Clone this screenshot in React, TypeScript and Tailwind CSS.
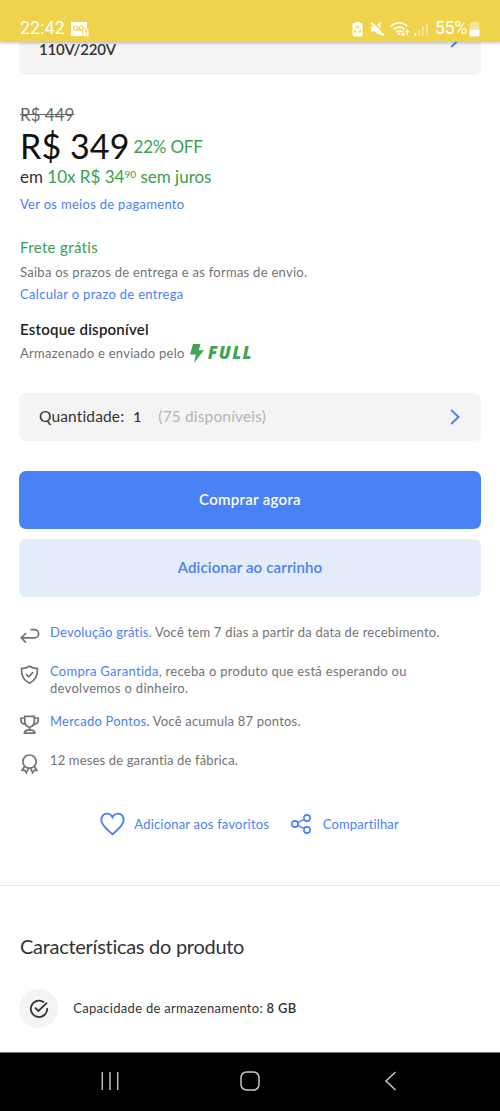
import React from "react";

const StatusBar = () => {
  return (
    <header className="relative z-10 flex h-[42px] shrink-0 items-end justify-between bg-[#efd34c] pb-[4px] pl-5 pr-[20px] font-['Roboto',sans-serif] text-[18px] leading-[20px] text-white shadow-[0_1px_3px_rgba(0,0,0,0.25)]">
      <div className="flex items-center gap-[5px]">
        <span>22:42</span>
        <svg width="20" height="16" viewBox="0 0 20 16" fill="none" className="mt-[1px]">
          <path d="M1 1h16v7h1v7H1z" fill="#fff" />
          <circle cx="5.700" cy="7" r="2" stroke="#efd34c" strokeWidth="1.200" />
          <circle cx="11.300" cy="7" r="2" stroke="#efd34c" strokeWidth="1.200" />
          <path d="M5.700 9h5.600" stroke="#efd34c" strokeWidth="1.200" />
          <rect x="12.600" y="7.600" width="6.400" height="7.800" rx="1" fill="#fff" stroke="#efd34c" strokeWidth="0.800" />
          <path d="M15 10l1.200-.6v4.200" stroke="#efd34c" strokeWidth="1.100" />
        </svg>
      </div>
      <div className="flex items-center">
        <svg width="11" height="16" viewBox="0 0 11 16" fill="none" className="mr-[7px] mt-[1px]">
          <path d="M3 1h5v1.500H3z" fill="#fff" />
          <rect x="0.500" y="2" width="10" height="13.500" rx="1.600" fill="#fff" />
          <path d="M3.800 7.400l1.700-2.400 1.700 2.400M8 8.600l.7 2.300H6.200M3 8.600l-.7 2.300h2.400" stroke="#efd34c" strokeWidth="1.100" />
        </svg>
        <svg width="15" height="16" viewBox="0 0 15 16" fill="none" className="mr-[5px] mt-[1px]">
          <path d="M1 5.500h3.500L10.500 1v13.500L4.500 10.500H1z" fill="#fff" />
          <path d="M3 .8l11.500 11.700" stroke="#efd34c" strokeWidth="1.600" />
          <path d="M1.200 1.600l12.500 12.800" stroke="#fff" strokeWidth="1.900" />
        </svg>
        <svg width="20" height="16" viewBox="0 0 20 16" fill="none" className="mr-[4px] mt-[1px]">
          <path d="M1 5.400c4.600-4.600 11.600-4.600 16.200 0M3.700 8.400c3-3 7.800-3 10.800 0" stroke="#fff" strokeWidth="1.700" />
          <path d="M6.300 11.200c1.600-1.500 4-1.500 5.200-.4" stroke="#fff" strokeWidth="1.600" />
          <circle cx="9" cy="12.800" r="1.300" fill="#fff" />
          <path d="M13 9.500v5M11.300 12.800l1.700 1.900 1.700-1.900M17.300 14.500V9.300M15.600 11l1.700-1.900L19 11" stroke="#fff" strokeWidth="1.200" />
        </svg>
        <svg width="14" height="16" viewBox="0 0 14 16" fill="#fff" className="mr-[7px] mt-[1px]">
          <rect x="0.500" y="12" width="1.600" height="3" />
          <rect x="4.200" y="9" width="1.600" height="6" opacity="0.450" />
          <rect x="8" y="5.500" width="1.600" height="9.500" opacity="0.450" />
          <rect x="12" y="2" width="1.600" height="13" opacity="0.450" />
        </svg>
        <span className="mr-[2px] tracking-[-0.400px]">55%</span>
        <svg width="11" height="16" viewBox="0 0 11 16" className="mt-[1px]">
          <path d="M3 1h5v1h1.500q1 0 1 1v5.500H.5V3q0-1 1-1H3z" fill="#fff" opacity="0.450" />
          <path d="M.5 8.500h10V14q0 1.500-1.500 1.500H2Q.5 15.500.5 14z" fill="#fff" />
        </svg>
      </div>
    </header>
  );
};

const Chevron = () => {
  return (
    <svg width="10" height="16" viewBox="0 0 10 16" fill="none" stroke="#4882f4" strokeWidth="1.900">
      <path d="M1.200 1l7.300 7-7.300 7" />
    </svg>
  );
};

const iconProps = {
  width: 20,
  height: 20,
  viewBox: "0 0 20 20",
  fill: "none",
  stroke: "#737373",
  strokeWidth: 1.7,
};

const Benefits = () => {
  return (
    <ul className="mt-[27px] flex flex-col gap-4 pl-[0.700px] text-[13px] leading-[17px] text-[#737373]">
      <li className="flex min-h-[23px] gap-[10px]">
        <svg {...iconProps} className="mt-[2px] shrink-0">
          <path d="M10.500 3.600h4a4.100 4.100 0 0 1 0 8.200H1.200M6 7L1.200 11.800 6 16.600" />
        </svg>
        <p className="tracking-[0.210px]">
          <span className="text-[#4882f4]">Devolução grátis.</span> Você tem 7 dias a partir da data de recebimento.
        </p>
      </li>
      <li className="flex min-h-[23px] gap-[10px]">
        <svg {...iconProps} className="mt-[2px] shrink-0">
          <path d="M9.500 1.200C7.200 2.900 4.700 3.500 1.500 3.600c-.3 7.200 1.500 11.700 8 14.600 6.500-2.900 8.300-7.400 8-14.600-3.200-.1-5.700-.7-8-2.400z" />
          <path d="M6 9.200l2.600 2.600 4.600-4.600" />
        </svg>
        <p className="tracking-[0.290px]">
          <span className="text-[#4882f4]">Compra Garantida</span>, receba o produto que está esperando ou
          <br />
          devolvemos o dinheiro.
        </p>
      </li>
      <li className="flex min-h-[23px] gap-[10px]">
        <svg {...iconProps} className="mt-[2px] shrink-0">
          <path d="M4.800 1.300h9.600v4.900q0 4.800-4.800 6-4.800-1.200-4.800-6z" />
          <path d="M4.800 3H1v2.200Q1 9 5.600 9.300M14.400 3h3.800v2.200q0 3.800-4.600 4.100M9.600 12.200v2.600M4.400 18.200q0-3.300 5.200-3.400 5.200.1 5.200 3.400z" />
        </svg>
        <p className="tracking-[0.210px]">
          <span className="text-[#4882f4]">Mercado Pontos</span>. Você acumula 87 pontos.
        </p>
      </li>
      <li className="flex min-h-[23px] gap-[10px]">
        <svg {...iconProps} className="mt-[2px] shrink-0">
          <circle cx="9.500" cy="7.600" r="6.600" />
          <path d="M4.600 12.200l-2.400 4 2.600.2 1.600 2.400 2-4.300M14.400 12.200l2.400 4-2.600.2-1.600 2.400-2-4.300" />
        </svg>
        <p className="tracking-[0.150px]">12 meses de garantia de fábrica.</p>
      </li>
    </ul>
  );
};

const NavBar = () => {
  return (
    <nav className="flex h-[59px] shrink-0 items-center justify-between border-t border-[#777] bg-black px-[100px] pb-[2px]">
      <svg width="20" height="20" viewBox="0 0 20 20" stroke="#bdbdbd" strokeWidth="1.500">
        <path d="M2.300 1v18M10 1v18M17.700 1v18" />
      </svg>
      <svg width="20" height="20" viewBox="0 0 20 20" fill="none" stroke="#c8c8c8" strokeWidth="1.500">
        <rect x="1" y="1" width="18" height="18" rx="5.500" />
      </svg>
      <svg width="20" height="20" viewBox="0 0 20 20" fill="none" stroke="#c8c8c8" strokeWidth="1.500">
        <path d="M15.500 1L6 10l9.500 9" />
      </svg>
    </nav>
  );
};

const App = () => {
  return (
    <div className="flex h-[1111px] w-[500px] flex-col bg-white font-['Lato',sans-serif] text-[#333] [font-variant-ligatures:none]">
      <StatusBar />
      <main className="min-h-0 flex-1">
        <section className="px-[19.300px]">
          <div className="flex h-[33px] items-start justify-between rounded-b-[7px] bg-[#f4f4f4] pl-[19.700px] pr-[21px]">
            <p className="text-[15px] font-semibold leading-[15px] tracking-[-0.200px]">110V/220V</p>
            <div className="-mt-[10px]">
              <Chevron />
            </div>
          </div>

          <div className="pl-[0.700px]">
            <p className="mt-[31px] text-[17px] leading-[18px] text-[#666]">
              <span className="line-through">R$ 449</span>
            </p>
            <div className="mt-1 flex items-center gap-1 leading-[36px]">
              <span className="text-[34px] tracking-[0.100px] text-[#111]">R$ 349</span>
              <span className="relative top-[1px] text-[17px] tracking-[-0.200px] text-[#39a04f]">22% OFF</span>
            </div>
            <p className="mt-1 text-[17px] leading-[18px]">
              em{" "}
              <span className="text-[#39a04f]">
                10x R$ 34<span className="relative -top-[5px] text-[10px] leading-none">90</span> sem juros
              </span>
            </p>
            <p className="mt-[10px] text-[13px] leading-4 tracking-[0.300px] text-[#4882f4]">
              Ver os meios de pagamento
            </p>

            <p className="mt-[26px] text-[15px] leading-[18px] tracking-[0.350px] text-[#39a04f]">Frete grátis</p>
            <p className="mt-2 text-[13px] leading-4 tracking-[0.270px] text-[#737373]">
              Saiba os prazos de entrega e as formas de envio.
            </p>
            <p className="mt-[6px] text-[13px] leading-4 tracking-[0.310px] text-[#4882f4]">
              Calcular o prazo de entrega
            </p>

            <p className="mt-[18px] text-[15px] font-semibold leading-[18px] tracking-[0.230px] text-[#222]">
              Estoque disponível
            </p>
            <div className="mt-[7px] flex h-4 items-center text-[13px] leading-4 text-[#737373]">
              <span className="tracking-[0.270px]">Armazenado e enviado pelo</span>
              <svg width="14" height="19" viewBox="0 0 14 19" fill="#43a457" className="ml-[5px]">
                <path d="M3 0h7.500L8.800 6.200H14L4 19l1.800-8.500H0z" />
              </svg>
              <span className="ml-[4px] font-['Open_Sans',sans-serif] text-[17px] font-extrabold italic tracking-[1.400px] text-[#43a457]">
                FULL
              </span>
            </div>
          </div>

          <div className="mt-8 flex h-12 items-center rounded-[7px] bg-[#f4f4f4] pl-[19.700px] pr-[21px] text-[15.500px]">
            <span className="tracking-[0.150px]">Quantidade:</span>
            <span className="mb-[2px] ml-[9px] text-[14px] font-semibold">1</span>
            <span className="ml-[17px] tracking-[0.150px] text-[#b5b5b5]">(75 disponíveis)</span>
            <div className="ml-auto">
              <Chevron />
            </div>
          </div>

          <button className="mt-[30px] block h-[58px] w-full rounded-[7px] bg-[#4882f4] pb-[2px] text-[15px] font-semibold tracking-[0.300px] text-white">
            Comprar agora
          </button>
          <button className="mt-[10px] block h-[58px] w-full rounded-[7px] bg-[#e4ebf9] pb-[2px] text-[15px] font-semibold tracking-[0.150px] text-[#4882f4]">
            Adicionar ao carrinho
          </button>

          <Benefits />

          <div className="mt-[37px] flex h-6 items-center pl-[80.500px] text-[13px] text-[#4882f4]">
            <svg width="25" height="24" viewBox="0 0 25 24" fill="none" stroke="#4882f4" strokeWidth="1.900">
              <path d="M12.500 5.200C10.500.8 4.800.4 2.300 4.300c-3.100 5.300 1.500 10.600 10.200 18 8.700-7.400 13.300-12.700 10.200-18-2.500-3.900-8.200-3.500-10.200.9z" />
            </svg>
            <span className="ml-[9.500px] pt-[1px] tracking-[0.200px]">Adicionar aos favoritos</span>
            <svg width="20" height="20" viewBox="0 0 20 20" fill="none" stroke="#4882f4" strokeWidth="1.600" className="ml-[22px]">
              <circle cx="4" cy="10" r="3.100" />
              <circle cx="16" cy="4" r="3.100" />
              <circle cx="16" cy="16" r="3.100" />
              <path d="M6.800 8.600l6.400-3.200M6.800 11.400l6.400 3.200" />
            </svg>
            <span className="ml-[11.500px] pt-[1px] tracking-[0.150px]">Compartilhar</span>
          </div>
        </section>

        <section className="mt-[49px] border-t-[1.500px] border-[#e9e9e9] px-[19.300px] pt-[48px]">
          <h2 className="pl-[0.700px] text-[20px] leading-6 tracking-[-0.280px]">Características do produto</h2>
          <div className="mt-[31px] flex items-center gap-[15px]">
            <div className="flex size-[39px] items-center justify-center rounded-full bg-[#f4f4f4]">
              <svg width="20" height="20" viewBox="0 0 20 20" fill="none" stroke="#333" strokeWidth="1.800">
                <path d="M15 3.300A8.200 8.200 0 1 0 18.200 9" />
                <path d="M6 8.600l3.400 3.400L18 3.600" />
              </svg>
            </div>
            <p className="text-[13px] tracking-[0.290px]">
              Capacidade de armazenamento: <span className="font-semibold">8 GB</span>
            </p>
          </div>
        </section>
      </main>
      <NavBar />
    </div>
  );
};

export default App;
